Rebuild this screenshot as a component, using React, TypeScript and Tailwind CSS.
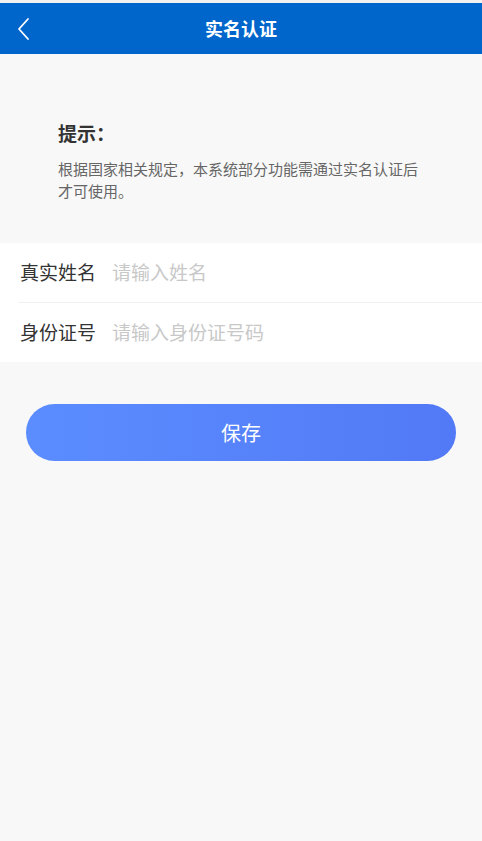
import { useState } from "react";

const font = "font-['Noto_Sans_CJK_SC','Noto_Sans',sans-serif]";

function Field({ label, placeholder }: { label: string; placeholder: string }) {
  const [value, setValue] = useState("");
  return (
    <div className="flex h-[59px] items-center">
      <span className="w-[92px] shrink-0 text-[19px] text-[#333]">{label}</span>
      <input
        value={value}
        onChange={(e) => setValue(e.target.value)}
        placeholder={placeholder}
        className="min-w-0 flex-1 bg-transparent text-[19px] text-[#333] outline-none placeholder:text-[#c8c8c8]"
      />
    </div>
  );
}

export default function App() {
  return (
    <div className={`min-h-[841px] w-full bg-[#f8f8f8] ${font}`}>
      {/* 状态栏 */}
      <div className="h-[3px] bg-[#f2f2f2]" />

      {/* 标题栏 */}
      <header className="relative flex h-[51px] items-center justify-center bg-[#0066cc]">
        <button className="absolute left-[12px] top-1/2 -translate-y-1/2 p-1">
          <svg width="16" height="24" viewBox="0 0 16 24" fill="none">
            <path d="M12 2 L3 12 L12 22" stroke="white" strokeWidth="1.8" strokeLinecap="round" strokeLinejoin="round" />
          </svg>
        </button>
        <h1 className="text-[18px] font-semibold text-white">实名认证</h1>
      </header>

      {/* 提示 */}
      <section className="px-[58px] pb-[41px] pt-[66px]">
        <h2 className="text-[19px] font-bold leading-[26px] text-[#333]">提示：</h2>
        <p className="mt-[12px] text-[15px] leading-[22px] text-[#666]">
          根据国家相关规定，本系统部分功能需通过实名认证后才可使用。
        </p>
      </section>

      {/* 表单 */}
      <section className="bg-white pl-[20px]">
        <Field label="真实姓名" placeholder="请输入姓名" />
        <div className="ml-[-2px] h-px bg-[#f1f1f1]" />
        <Field label="身份证号" placeholder="请输入身份证号码" />
      </section>

      {/* 保存 */}
      <div className="px-[26px] pt-[42px]">
        <button className="flex h-[57px] w-full items-center justify-center rounded-full bg-gradient-to-r from-[#5b8dff] to-[#5279f6] text-[20px] text-white">
          保存
        </button>
      </div>
    </div>
  );
}
